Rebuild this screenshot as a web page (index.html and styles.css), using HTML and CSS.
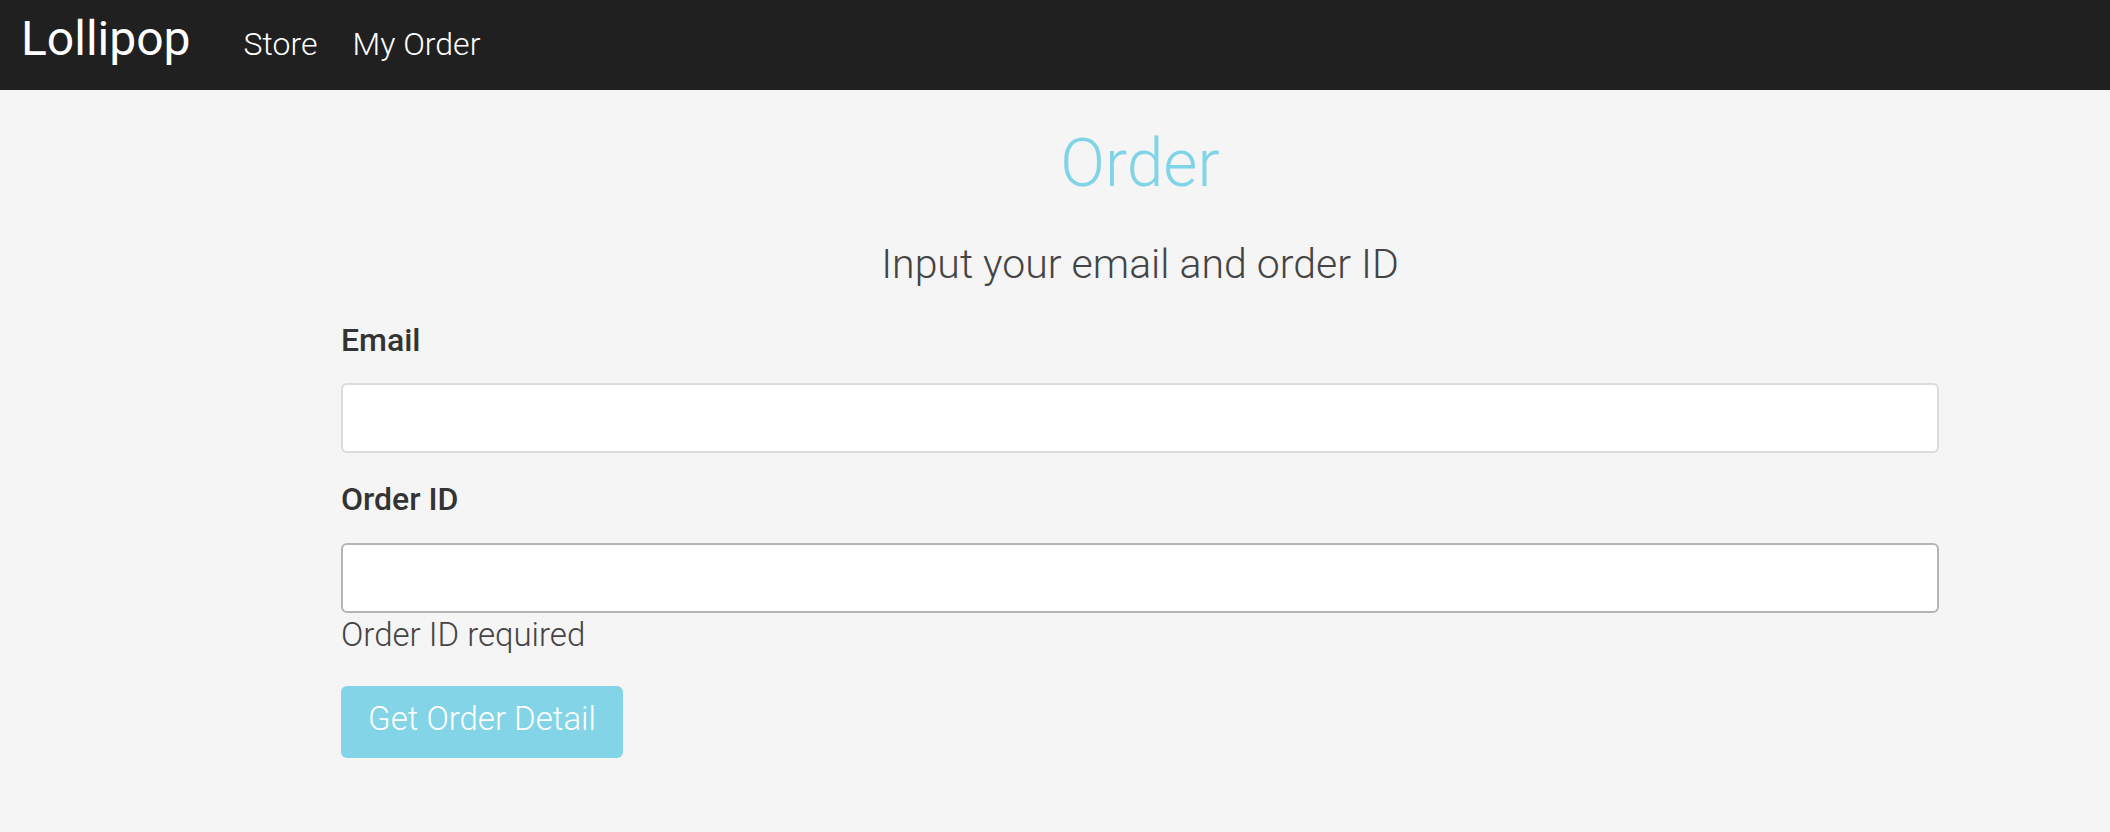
FILE: index.html
```html
<!DOCTYPE html>
<html lang="en">
<head>
    <meta charset="UTF-8">
    <meta name="viewport" content="width=device-width, initial-scale=1.0">
    <title>Lollipop - Order</title>
    <link rel="stylesheet" href="styles.css">
</head>
<body>
    <nav class="navbar">
        <a class="brand" href="#">Lollipop</a>
        <a class="nav-link" href="#">Store</a>
        <a class="nav-link" href="#">My Order</a>
    </nav>

    <main class="container">
        <div class="heading">
            <h1 class="title">Order</h1>
            <h2 class="subtitle">Input your email and order ID</h2>
        </div>

        <form class="order-form">
            <label for="email">Email</label>
            <input type="text" id="email">

            <label for="order_id" class="second">Order ID</label>
            <input type="text" id="order_id" class="invalid">
            <div class="hint">Order ID required</div>

            <button type="button">Get Order Detail</button>
        </form>
    </main>
</body>
</html>
```

FILE: styles.css
```css
body {
    margin: 0;
    background-color: #f5f5f5;
    font-family: Roboto, "Noto Sans", sans-serif;
    color: #333;
}
a {
    text-decoration: none;
}
.navbar {
    display: flex;
    align-items: baseline;
    box-sizing: border-box;
    height: 90px;
    padding: 15px 0 0 21px;
    background-color: #202020;
}
.brand {
    color: #fff;
    font-size: 48px;
    line-height: 1;
    margin-right: 53px;
}
.nav-link {
    color: #fff;
    font-size: 32px;
    font-weight: 300;
    margin-right: 35px;
}
.container {
    padding: 0 171px 0 341px;
}
.heading {
    text-align: center;
}
.title {
    margin: 36px 0 0;
    font-size: 66px;
    line-height: 76px;
    font-weight: 300;
    color: #80d4e7;
}
.subtitle {
    margin: 38px 0 0;
    font-size: 41px;
    line-height: 48px;
    font-weight: 300;
    color: #444;
}
.order-form label {
    display: block;
    margin: 33px 0 24px;
    font-size: 32px;
    line-height: 38px;
    font-weight: 500;
    color: #333;
}
.order-form label.second {
    margin-top: 27px;
    margin-bottom: 25px;
}
.order-form input {
    display: block;
    box-sizing: border-box;
    width: 100%;
    height: 70px;
    padding: 0 16px;
    border: 2px solid #dcdcdc;
    border-radius: 6px;
    background-color: #fff;
    font-size: 30px;
}
.order-form input.invalid {
    border-color: #b4b4b4;
}
.hint {
    margin-top: 2px;
    font-size: 33px;
    line-height: 39px;
    font-weight: 300;
    color: #444;
}
button {
    display: block;
    box-sizing: border-box;
    width: 282px;
    height: 72px;
    margin-top: 32px;
    padding: 0 0 6px;
    border: none;
    border-radius: 6px;
    background-color: #82d4e6;
    color: #fff;
    font-family: Roboto, "Noto Sans", sans-serif;
    font-size: 33px;
    line-height: 66px;
    font-weight: 300;
    cursor: pointer;
}
```
